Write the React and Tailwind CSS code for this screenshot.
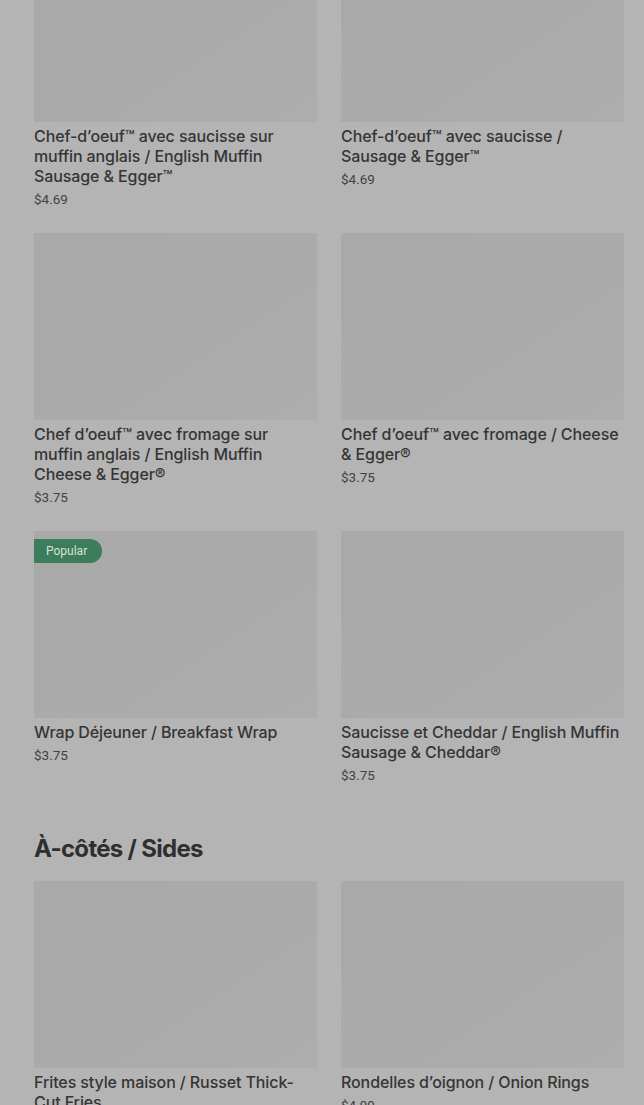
import React from "react";

const breakfast = [
  { title: "Chef-d’oeuf™ avec saucisse sur muffin anglais / English Muffin Sausage & Egger™", price: "$4.69" },
  { title: "Chef-d’oeuf™ avec saucisse / Sausage & Egger™", price: "$4.69" },
  { title: "Chef d’oeuf™ avec fromage sur muffin anglais / English Muffin Cheese & Egger®", price: "$3.75" },
  { title: "Chef d’oeuf™ avec fromage / Cheese & Egger®", price: "$3.75" },
  { title: "Wrap Déjeuner / Breakfast Wrap", price: "$3.75", popular: true },
  { title: "Saucisse et Cheddar / English Muffin Sausage & Cheddar®", price: "$3.75" },
];

const sides = [
  { title: "Frites style maison / Russet Thick-Cut Fries", price: "$3.29" },
  { title: "Rondelles d’oignon / Onion Rings", price: "$4.99" },
];

function Card({ item }) {
  return (
    <div className="flex flex-col">
      <div className="relative h-[187px] w-full bg-gradient-to-br from-[#a9a9a9] via-[#aaaaaa] to-[#adadad]">
        {item.popular && (
          <div className="absolute left-0 top-[8px] flex h-[24px] items-center rounded-r-full bg-[#3c7d5b] pl-[12px] pr-[15px] text-[12px] leading-none text-[#d8e2dc]">
            Popular
          </div>
        )}
      </div>
      <div
        className="mt-[4px] text-[16px] font-medium leading-[20px] tracking-[-0.1px] text-[#353535]"
        style={{ fontFamily: "Inter, Roboto, sans-serif" }}
      >
        {item.title}
      </div>
      <div className="mt-[3px] text-[13.5px] leading-[20px] text-[#424242]">{item.price}</div>
    </div>
  );
}

export default function App() {
  return (
    <div
      className="h-[1105px] w-[644px] overflow-hidden bg-[#b4b4b4]"
      style={{ fontFamily: "Roboto, 'Noto Sans', sans-serif" }}
    >
      <div className="mt-[-65px] pl-[34px] pr-[20px]">
        <div className="grid grid-cols-2 gap-x-[24px] gap-y-[24px]">
          {breakfast.map((it, i) => (
            <Card key={i} item={it} />
          ))}
        </div>
        <h2
          className="mt-[48px] text-[24px] font-bold leading-[32px] tracking-[-0.7px] text-[#2f2f2f]"
          style={{ fontFamily: "Inter, Roboto, sans-serif" }}
        >
          À-côtés / Sides
        </h2>
        <div className="mt-[16px] grid grid-cols-2 gap-x-[24px] gap-y-[24px]">
          {sides.map((it, i) => (
            <Card key={i} item={it} />
          ))}
        </div>
      </div>
    </div>
  );
}
